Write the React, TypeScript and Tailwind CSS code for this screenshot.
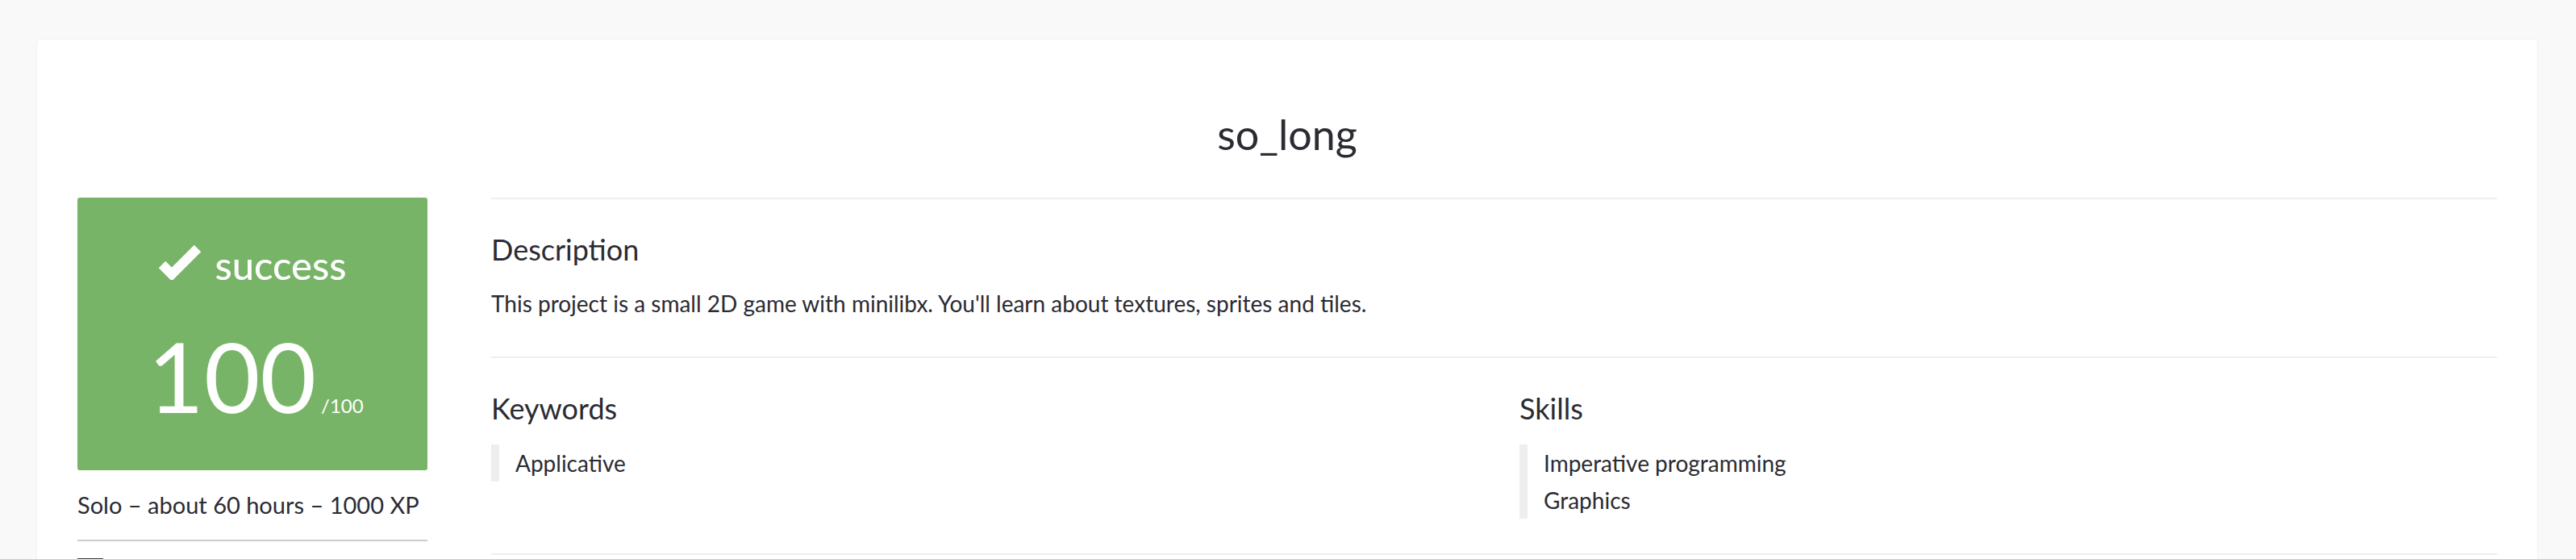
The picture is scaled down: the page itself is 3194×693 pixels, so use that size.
import React from "react";

const font = { fontFamily: "Lato, 'Noto Sans', 'Liberation Sans', sans-serif" };

function Check() {
  return (
    <svg width="54" height="46" viewBox="0 0 54 46" className="mb-[6px] mr-[16px] shrink-0">
      <polyline
        points="5,27 17,39 49,7"
        fill="none"
        stroke="#ffffff"
        strokeWidth="12"
        strokeLinecap="butt"
        strokeLinejoin="miter"
      />
    </svg>
  );
}

function Section({ title, children }: { title: string; children: React.ReactNode }) {
  return (
    <div className="border-t-2 border-[#eeeeee] pt-[44px] pb-[43px]">
      <h2 className="text-[36px] leading-none font-normal text-[#2b2b33]">{title}</h2>
      {children}
    </div>
  );
}

function TagList({ items }: { items: string[] }) {
  return (
    <ul className="mt-[27px] border-l-[10px] border-[#eeeeee] pl-[20px]">
      {items.map((it) => (
        <li key={it} className="text-[28px] leading-[46px] text-[#2b2b33]">
          {it}
        </li>
      ))}
    </ul>
  );
}

export default function App() {
  return (
    <div className="min-h-screen bg-[#f9f9f9] pt-[48px] pl-[45px] pr-[47px]" style={font}>
      <div className="bg-white rounded-[6px] border border-[#f2f2f2] px-[50px] pb-[200px]">
        <h1 className="text-center text-[52px] leading-none font-normal text-[#2b2b33] pt-[91px] pb-[53px]">
          so_long
        </h1>
        <div className="flex">
          <aside className="w-[434px] shrink-0">
            <div className="bg-[#77b467] rounded-[3px] h-[338px] pt-[56px] flex flex-col items-center text-white">
              <div className="flex items-end">
                <Check />
                <span className="text-[49px] leading-none font-medium">success</span>
              </div>
              <div className="mt-[53px] flex items-baseline pl-[8px]">
                <span className="text-[120px] leading-none font-normal">100</span>
                <span className="text-[24px] leading-none ml-[6px]">/100</span>
              </div>
            </div>
            <p className="mt-[20px] text-[29px] leading-[46px] text-[#2b2b33]">
              Solo – about 60 hours – 1000 XP
            </p>
            <div className="mt-[20px] h-[2px] bg-[#cccccc]" />
            <div className="mt-[21px] w-[32px] h-[24px] border-t border-[#444444]" />
          </aside>
          <main className="flex-1 ml-[79px]">
            <Section title="Description">
              <p className="mt-[26px] text-[28px] leading-[46px] text-[#2b2b33]">
                This project is a small 2D game with minilibx. You'll learn about textures, sprites and tiles.
              </p>
            </Section>
            <div className="border-t-2 border-[#eeeeee] pt-[44px] pb-[43px] grid grid-cols-2 gap-x-[63px]">
              <div>
                <h2 className="text-[36px] leading-none font-normal text-[#2b2b33]">Keywords</h2>
                <TagList items={["Applicative"]} />
              </div>
              <div>
                <h2 className="text-[36px] leading-none font-normal text-[#2b2b33]">Skills</h2>
                <TagList items={["Imperative programming", "Graphics"]} />
              </div>
            </div>
            <div className="border-t-2 border-[#eeeeee] h-[100px]" />
          </main>
        </div>
      </div>
    </div>
  );
}
